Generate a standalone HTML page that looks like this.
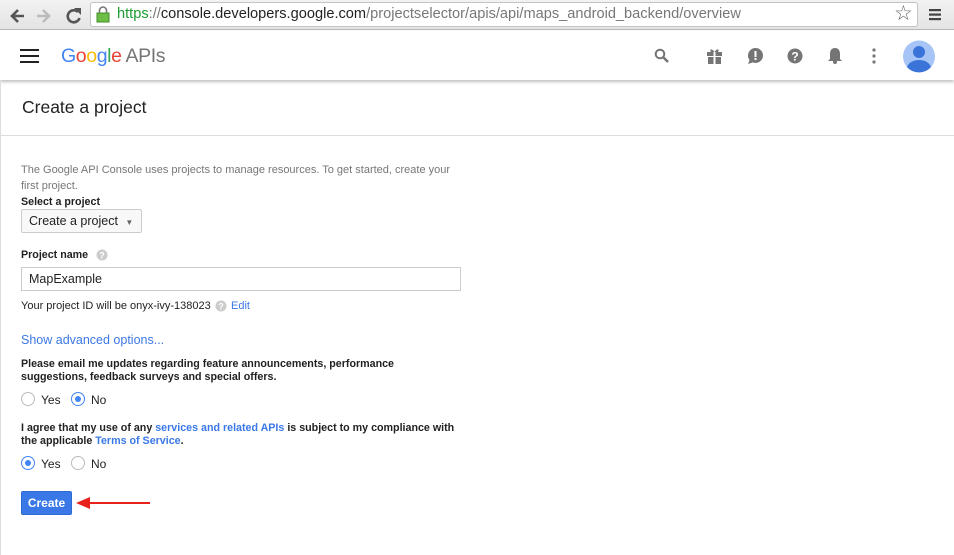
<!DOCTYPE html>
<html><head><style>
*{box-sizing:border-box;margin:0;padding:0}
body{width:954px;height:555px;overflow:hidden;background:#fff;font-family:"Liberation Sans",Arial,sans-serif;position:relative}
.abs{position:absolute}
.chrome{left:0;top:0;width:954px;height:30px;background:linear-gradient(#f2f2f2,#e4e4e4);border-bottom:1px solid #b8b8b8}
.url{left:90px;top:2px;width:828px;height:25px;background:#fff;border:1px solid #c4c4c4;border-radius:3px;font-size:14.6px;line-height:23px;padding-left:26px;color:#777}
.hdr{left:0;top:31px;width:954px;height:49px;background:#fff;box-shadow:0 2px 3px rgba(0,0,0,.25)}
.t{font-size:11px;color:#222}
.lbl{font-size:10.7px;font-weight:bold;color:#222}
a{color:#3b78e7;text-decoration:none}
.radio{width:14px;height:14px;border-radius:50%;border:1px solid #bbb;background:#fff}
.radio.on{border:1px solid #4285f4}
.radio.on:after{content:"";position:absolute;left:3px;top:3px;width:6px;height:6px;border-radius:50%;background:#4285f4}
.ico{fill:#757575}
</style></head><body>
<div class="abs chrome"></div>
<svg class="abs" style="left:8px;top:6px" width="80" height="20" viewBox="0 0 80 20">
<path d="M16 10H5M10 4L4 10l6 6" stroke="#555" stroke-width="2.6" fill="none"/>
<path d="M29 10h11M35 4l6 6-6 6" stroke="#bbb" stroke-width="2.6" fill="none"/>
<path d="M70 6a6 6 0 1 0 1.5 6" stroke="#555" stroke-width="2.6" fill="none"/><path d="M66 2h7v7z" fill="#555"/>
</svg>
<div class="abs url"><span style="color:#1a9b2f">https</span><span style="color:#777">://</span><span style="color:#222">console.developers.google.com</span>/projectselector/apis/api/maps_android_backend/overview</div>
<svg class="abs" style="left:96px;top:6px" width="14" height="17" viewBox="0 0 14 17"><rect x="1" y="7" width="12" height="9" fill="#6cbe45" stroke="#3f8f25"/><path d="M3.5 7V4.5a3.5 3.5 0 0 1 7 0V7" stroke="#777" stroke-width="1.6" fill="none"/></svg>
<div class="abs" style="left:894px;top:1px;font-size:21px;color:#666">☆</div>
<svg class="abs" style="left:929px;top:8px" width="12" height="13"><rect y="1" width="12" height="2.2" fill="#444"/><rect y="5.5" width="12" height="2.2" fill="#444"/><rect y="10" width="12" height="2.2" fill="#444"/></svg>
<div class="abs hdr"></div>
<svg class="abs" style="left:20px;top:49px" width="19" height="14"><rect y="0" width="19" height="2" fill="#222"/><rect y="6" width="19" height="2" fill="#222"/><rect y="12" width="19" height="2" fill="#222"/></svg>
<div class="abs" style="left:61px;top:45px;font-size:19.5px;letter-spacing:-.4px"><span style="color:#4285f4">G</span><span style="color:#ea4335">o</span><span style="color:#fbbc05">o</span><span style="color:#4285f4">g</span><span style="color:#34a853">l</span><span style="color:#ea4335">e</span> <span style="color:#757575">APIs</span></div>
<svg class="abs" style="left:654px;top:48px" width="16" height="16"><circle cx="6" cy="6" r="4.3" stroke="#757575" stroke-width="2" fill="none"/><path d="M9 9l5 5" stroke="#757575" stroke-width="2.5"/></svg>
<svg class="abs ico" style="left:707px;top:48px" width="15" height="16"><rect x="0" y="4" width="15" height="4"/><rect x="1" y="9" width="13" height="7"/><rect x="6.5" y="4" width="2" height="12" fill="#fff"/><path d="M7.5 4C5 0 2 1 4 4zM7.5 4C10 0 13 1 11 4z"/></svg>
<svg class="abs ico" style="left:746px;top:47px" width="18" height="18"><circle cx="9.5" cy="8.5" r="7.5"/><path d="M2 17l2-5 4 3z"/><rect x="8.5" y="4" width="2" height="6" fill="#fff"/><rect x="8.5" y="11" width="2" height="2" fill="#fff"/></svg>
<svg class="abs ico" style="left:787px;top:48px" width="16" height="16"><circle cx="8" cy="8" r="7.5"/><text x="8" y="12.5" font-size="12" font-weight="bold" text-anchor="middle" fill="#fff" font-family="Liberation Sans">?</text></svg>
<svg class="abs ico" style="left:828px;top:47px" width="14" height="17"><path d="M7 1c3.5 0 5 2.5 5 6v5l2 2H0l2-2V7c0-3.5 1.5-6 5-6z"/><circle cx="7" cy="15" r="2"/></svg>
<svg class="abs ico" style="left:872px;top:48px" width="4" height="16"><circle cx="2" cy="2" r="1.6"/><circle cx="2" cy="8" r="1.6"/><circle cx="2" cy="14" r="1.6"/></svg>
<svg class="abs" style="left:902px;top:40px" width="34" height="33"><circle cx="17" cy="16.5" r="16" fill="#a6c4f5"/><circle cx="17" cy="12" r="6" fill="#3b74d8"/><path d="M5 27c2-5 7-7 12-7s10 2 12 7a16 16 0 0 1-24 0z" fill="#3b74d8"/></svg>
<div class="abs" style="left:0;top:80px;width:1px;height:475px;background:#ddd"></div>
<div class="abs" style="left:22px;top:97px;font-size:17.5px;color:#222">Create a project</div>
<div class="abs" style="left:0;top:135px;width:954px;height:1px;background:#ddd"></div>
<div class="abs t" style="left:21px;top:162px;width:440px;line-height:16px;color:#777">The Google API Console uses projects to manage resources. To get started, create your first project.</div>
<div class="abs lbl" style="left:21px;top:196px">Select a project</div>
<div class="abs" style="left:21px;top:209px;width:121px;height:24px;border:1px solid #ccc;border-radius:2px;background:#f8f8f8;font-size:12.5px;line-height:22px;padding-left:7px;color:#222">Create a project <span style="font-size:8px;color:#666;margin-left:4px">▼</span></div>
<div class="abs lbl" style="left:21px;top:249px">Project name</div>
<svg class="abs" style="left:96px;top:249px" width="12" height="12"><circle cx="6" cy="6" r="5.5" fill="#ccc"/><text x="6" y="9.5" font-size="9" text-anchor="middle" fill="#fff" font-weight="bold" font-family="Liberation Sans">?</text></svg>
<div class="abs" style="left:21px;top:267px;width:440px;height:24px;border:1px solid #ccc;font-size:12.5px;line-height:22px;padding-left:7px;color:#222">MapExample</div>
<div class="abs t" style="left:21px;top:300px">Your project ID will be onyx-ivy-138023</div>
<svg class="abs" style="left:215px;top:300px" width="12" height="12"><circle cx="6" cy="6" r="5.5" fill="#ccc"/><text x="6" y="9.5" font-size="9" text-anchor="middle" fill="#fff" font-weight="bold" font-family="Liberation Sans">?</text></svg>
<a class="abs t" style="left:231px;top:300px;color:#3b78e7">Edit</a>
<a class="abs" style="left:21px;top:333px;font-size:12.5px">Show advanced options...</a>
<div class="abs lbl" style="left:21px;top:358px;width:440px;line-height:13px">Please email me updates regarding feature announcements, performance suggestions, feedback surveys and special offers.</div>
<div class="abs radio" style="left:21px;top:392px"></div><div class="abs t" style="left:41px;top:393px;font-size:12px">Yes</div>
<div class="abs radio on" style="left:71px;top:392px"></div><div class="abs t" style="left:91px;top:393px;font-size:12px">No</div>
<div class="abs lbl" style="left:21px;top:422px;width:445px;line-height:13px">I agree that my use of any <a>services and related APIs</a> is subject to my compliance with the applicable <a>Terms of Service</a>.</div>
<div class="abs radio on" style="left:21px;top:456px"></div><div class="abs t" style="left:41px;top:457px;font-size:12px">Yes</div>
<div class="abs radio" style="left:71px;top:456px"></div><div class="abs t" style="left:91px;top:457px;font-size:12px">No</div>
<div class="abs" style="left:21px;top:491px;width:51px;height:24px;background:#3b78e7;border:1px solid #2f6bd4;border-radius:2px;color:#fff;font-size:12px;font-weight:bold;line-height:22px;text-align:center">Create</div>
<svg class="abs" style="left:74px;top:496px" width="78" height="14"><path d="M14 7H76" stroke="#e8221a" stroke-width="2"/><path d="M2 7l14-6v12z" fill="#e8221a"/></svg>
</body></html>
